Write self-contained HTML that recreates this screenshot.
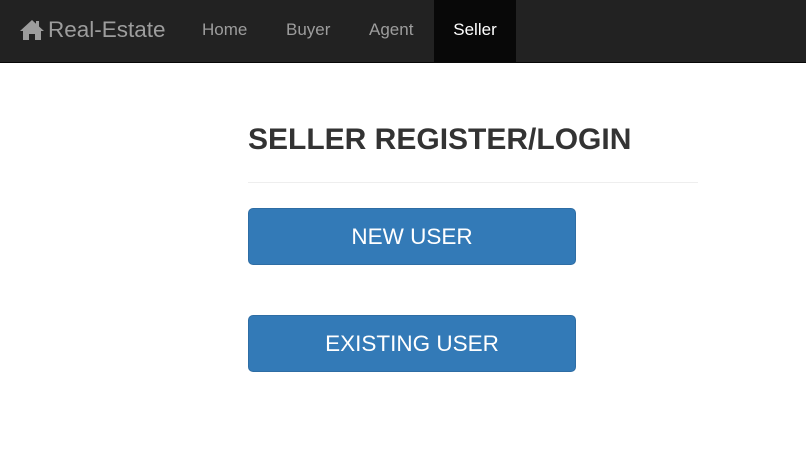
<!DOCTYPE html>
<html><head><meta charset="utf-8"><style>
*{margin:0;padding:0;box-sizing:border-box}
body{width:806px;height:455px;background:#fff;font-family:"Liberation Sans",Arial,sans-serif;overflow:hidden;position:relative}
.nav{position:absolute;left:0;top:0;width:806px;height:63px;background:#222;border-bottom:1px solid #080808}
.brand{position:absolute;left:19px;top:17px;color:#9d9d9d;font-size:22.5px;display:flex;align-items:center}
.brand svg{margin-right:3px}
.link{position:absolute;top:0;height:62px;line-height:60px;color:#9d9d9d;font-size:17px}
.active{background:#080808;color:#fff;text-align:center}
h1{position:absolute;left:248px;top:123px;font-size:30px;font-weight:bold;color:#333}
.hr{position:absolute;left:248px;top:182px;width:450px;height:1px;background:#eee}
.btn{position:absolute;left:248px;width:328px;height:57px;background:#337ab7;border:1px solid #2e6da4;border-radius:5px;color:#fff;font-size:22.5px;text-align:center;line-height:55px}
</style></head><body>
<div class="nav">
 <div class="brand"><svg width="26" height="22" viewBox="0 0 26 22"><path d="M13 1 L1 12 L4 12 L4 21 L10 21 L10 15 L16 15 L16 21 L22 21 L22 12 L25 12 L20 7.5 L20 2 L17 2 L17 4.8 Z" fill="#9d9d9d"/></svg>Real-Estate</div>
 <div class="link" style="left:202px">Home</div>
 <div class="link" style="left:286px">Buyer</div>
 <div class="link" style="left:369px">Agent</div>
 <div class="link active" style="left:434px;width:82px">Seller</div>
</div>
<h1>SELLER REGISTER/LOGIN</h1>
<div class="hr"></div>
<div class="btn" style="top:208px">NEW USER</div>
<div class="btn" style="top:315px">EXISTING USER</div>
</body></html>
